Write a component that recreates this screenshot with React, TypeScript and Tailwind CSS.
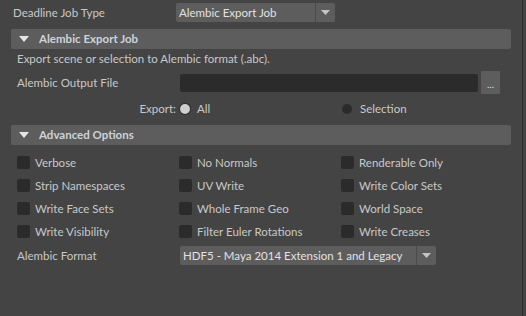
import React from "react";

const font = { fontFamily: "Lato, 'Open Sans', sans-serif" };

function Arrow() {
  return (
    <svg width="9" height="5" viewBox="0 0 9 5">
      <path d="M0 0 L9 0 L4.5 5 Z" fill="#c4c4c4" />
    </svg>
  );
}

function Dropdown({ value, width, split }: { value: string; width: string; split: string }) {
  return (
    <div className={`flex h-[19px] ${width} rounded-[2px] bg-[#5d5d5d] text-[#e2e2e2]`}>
      <div className={`flex ${split} items-center pl-[3px] leading-none`}>{value}</div>
      <div className="w-px bg-[#4a4a4a]" />
      <div className="flex flex-1 items-center justify-center">
        <Arrow />
      </div>
    </div>
  );
}

function Header({ title }: { title: string }) {
  return (
    <div className="mx-[11px] flex h-[20px] items-center rounded-[2px] bg-[#5d5d5d]">
      <svg width="10" height="6" viewBox="0 0 10 6" className="ml-[8px]">
        <path d="M0 0 L10 0 L5 6 Z" fill="#e6e6e6" />
      </svg>
      <span className="ml-[10px] font-bold text-[#cdd3da]">{title}</span>
    </div>
  );
}

function Radio({ on }: { on?: boolean }) {
  return (
    <span
      className={`inline-block h-[10px] w-[10px] rounded-full ${
        on ? "bg-[#cfcfcf] ring-1 ring-[#2e2e2e]" : "bg-[#2b2b2b]"
      }`}
    />
  );
}

const options = [
  "Verbose",
  "No Normals",
  "Renderable Only",
  "Strip Namespaces",
  "UV Write",
  "Write Color Sets",
  "Write Face Sets",
  "Whole Frame Geo",
  "World Space",
  "Write Visibility",
  "Filter Euler Rotations",
  "Write Creases",
];

export default function App() {
  return (
    <div
      className="flex h-[316px] w-[526px] overflow-hidden bg-[#444444] text-[11.5px] text-[#c8c8c8]"
      style={font}
    >
      <div className="w-[522px]">
        {/* job type */}
        <div className="mt-[3px] flex items-center">
          <div className="w-[176px] pl-[13px]">Deadline Job Type</div>
          <Dropdown value="Alembic Export Job" width="w-[159px]" split="w-[139px]" />
        </div>

        <div className="mt-[7px]">
          <Header title="Alembic Export Job" />
        </div>

        <div className="mt-[2px] h-[16px] pl-[17px] leading-[16px]">
          Export scene or selection to Alembic format (.abc).
        </div>

        <div className="mt-[4px] flex h-[23px] items-center">
          <div className="w-[180px] pl-[17px]">Alembic Output File</div>
          <div className="h-[18px] w-[298px] rounded-[2px] bg-[#2b2b2b]" />
          <div className="ml-[3px] flex h-[23px] w-[19px] items-end justify-center rounded-[1px] bg-[#5d5d5d] pb-[5px] text-[10px] leading-none text-[#dedede]">
            ...
          </div>
        </div>

        <div className="mt-[7px] flex h-[16px] items-center">
          <div className="w-[176px] text-right">Export:</div>
          <div className="ml-[4px] flex w-[162px] items-center">
            <Radio on />
            <span className="ml-[7px]">All</span>
          </div>
          <div className="flex items-center">
            <Radio />
            <span className="ml-[8px]">Selection</span>
          </div>
        </div>

        <div className="mt-[8px]">
          <Header title="Advanced Options" />
        </div>

        <div className="mt-[6px] grid grid-cols-[162px_162px_162px] pl-[17px]">
          {options.map((o) => (
            <div key={o} className="flex h-[23px] items-center">
              <span className="h-[13px] w-[13px] rounded-[2px] bg-[#2b2b2b]" />
              <span className="ml-[5px]">{o}</span>
            </div>
          ))}
        </div>

        <div className="mt-[3px] flex items-center">
          <div className="w-[180px] pl-[17px]">Alembic Format</div>
          <Dropdown
            value="HDF5 - Maya 2014 Extension 1 and Legacy"
            width="w-[256px]"
            split="w-[236px]"
          />
        </div>
      </div>
      <div className="w-px bg-[#2a2a2a]" />
    </div>
  );
}
